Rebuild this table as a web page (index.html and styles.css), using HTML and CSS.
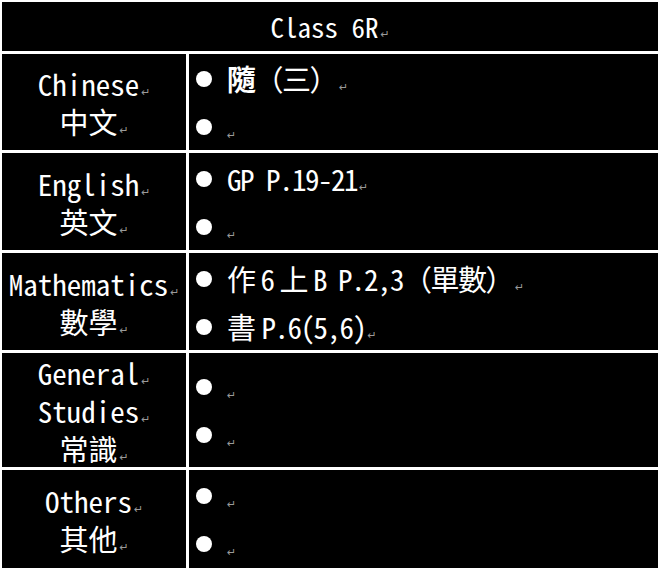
FILE: index.html
```html
<!DOCTYPE html>
<html lang="zh-Hant">
<head>
<meta charset="utf-8">
<title>Class 6R</title>
<link rel="stylesheet" href="styles.css">
</head>
<body>
<div class="sheet">
  <div class="title">Class 6R<span class="rm">↵</span></div>

  <div class="subj"><p>Chinese<span class="rm">↵</span></p><p>中文<span class="rm">↵</span></p></div>
  <div class="hw">
    <p><i class="dot"></i><b class="bold">隨</b>（三）<span class="rm">↵</span></p>
    <p><i class="dot"></i><span class="rm gap">↵</span></p>
  </div>

  <div class="subj"><p>English<span class="rm">↵</span></p><p>英文<span class="rm">↵</span></p></div>
  <div class="hw">
    <p><i class="dot"></i>GP P.19-21<span class="rm">↵</span></p>
    <p><i class="dot"></i><span class="rm gap">↵</span></p>
  </div>

  <div class="subj"><p>Mathematics<span class="rm">↵</span></p><p>數學<span class="rm">↵</span></p></div>
  <div class="hw">
    <p><i class="dot"></i>作<span class="sp">6</span>上<span class="sp">B</span><span class="sp1">P.2,3</span>（單數）<span class="rm">↵</span></p>
    <p><i class="dot"></i>書<span class="sp0">P.6(5,6)</span><span class="rm">↵</span></p>
  </div>

  <div class="subj"><p>General<span class="rm">↵</span></p><p>Studies<span class="rm">↵</span></p><p>常識<span class="rm">↵</span></p></div>
  <div class="hw">
    <p><i class="dot"></i><span class="rm gap">↵</span></p>
    <p><i class="dot"></i><span class="rm gap">↵</span></p>
  </div>

  <div class="subj"><p>Others<span class="rm">↵</span></p><p>其他<span class="rm">↵</span></p></div>
  <div class="hw">
    <p><i class="dot"></i><span class="rm gap">↵</span></p>
    <p><i class="dot"></i><span class="rm gap">↵</span></p>
  </div>
</div>
</body>
</html>
```
FILE: styles.css
```css
html, body {
  margin: 0;
  padding: 0;
  background: #ffffff;
}

.sheet {
  width: 662px;
  box-sizing: border-box;
  padding: 2px 4px 0 2px;
  display: grid;
  grid-template-columns: 184px 1fr;
  grid-template-rows: 49px 96px 97px 97px 114px 98px;
  gap: 3px;
  font-family: "Noto Sans Mono CJK TC", "Noto Sans CJK TC", "DejaVu Sans Mono", monospace;
  color: #ffffff;
}

.title {
  grid-column: 1 / 3;
  background: #000;
  font-size: 27px;
  line-height: 49px;
  text-align: center;
}

.subj,
.hw {
  background: #000;
  display: flex;
  flex-direction: column;
  justify-content: center;
}

.subj p,
.hw p {
  margin: 0;
  white-space: nowrap;
}

.subj p {
  font-size: 29px;
  line-height: 38px;
  height: 38px;
  text-align: center;
}

.hw p {
  font-size: 29px;
  letter-spacing: -1.5px;
  line-height: 48px;
  height: 48px;
  padding-left: 7px;
}

.dot {
  display: inline-block;
  width: 16px;
  height: 16px;
  border-radius: 50%;
  background: #fff;
  margin-right: 15px;
  vertical-align: 4px;
}

.bold {
  font-weight: 700;
}

.sp {
  margin: 0 6px;
}

.sp1 {
  margin-left: 6px;
}

.sp0 {
  margin-left: 7px;
}

.rm {
  font-family: "DejaVu Sans", sans-serif;
  font-size: 11px;
  letter-spacing: 0;
  line-height: 0;
  color: #9a9a9a;
  margin-left: 2px;
}

.rm.gap {
  margin-left: 0;
}
```
